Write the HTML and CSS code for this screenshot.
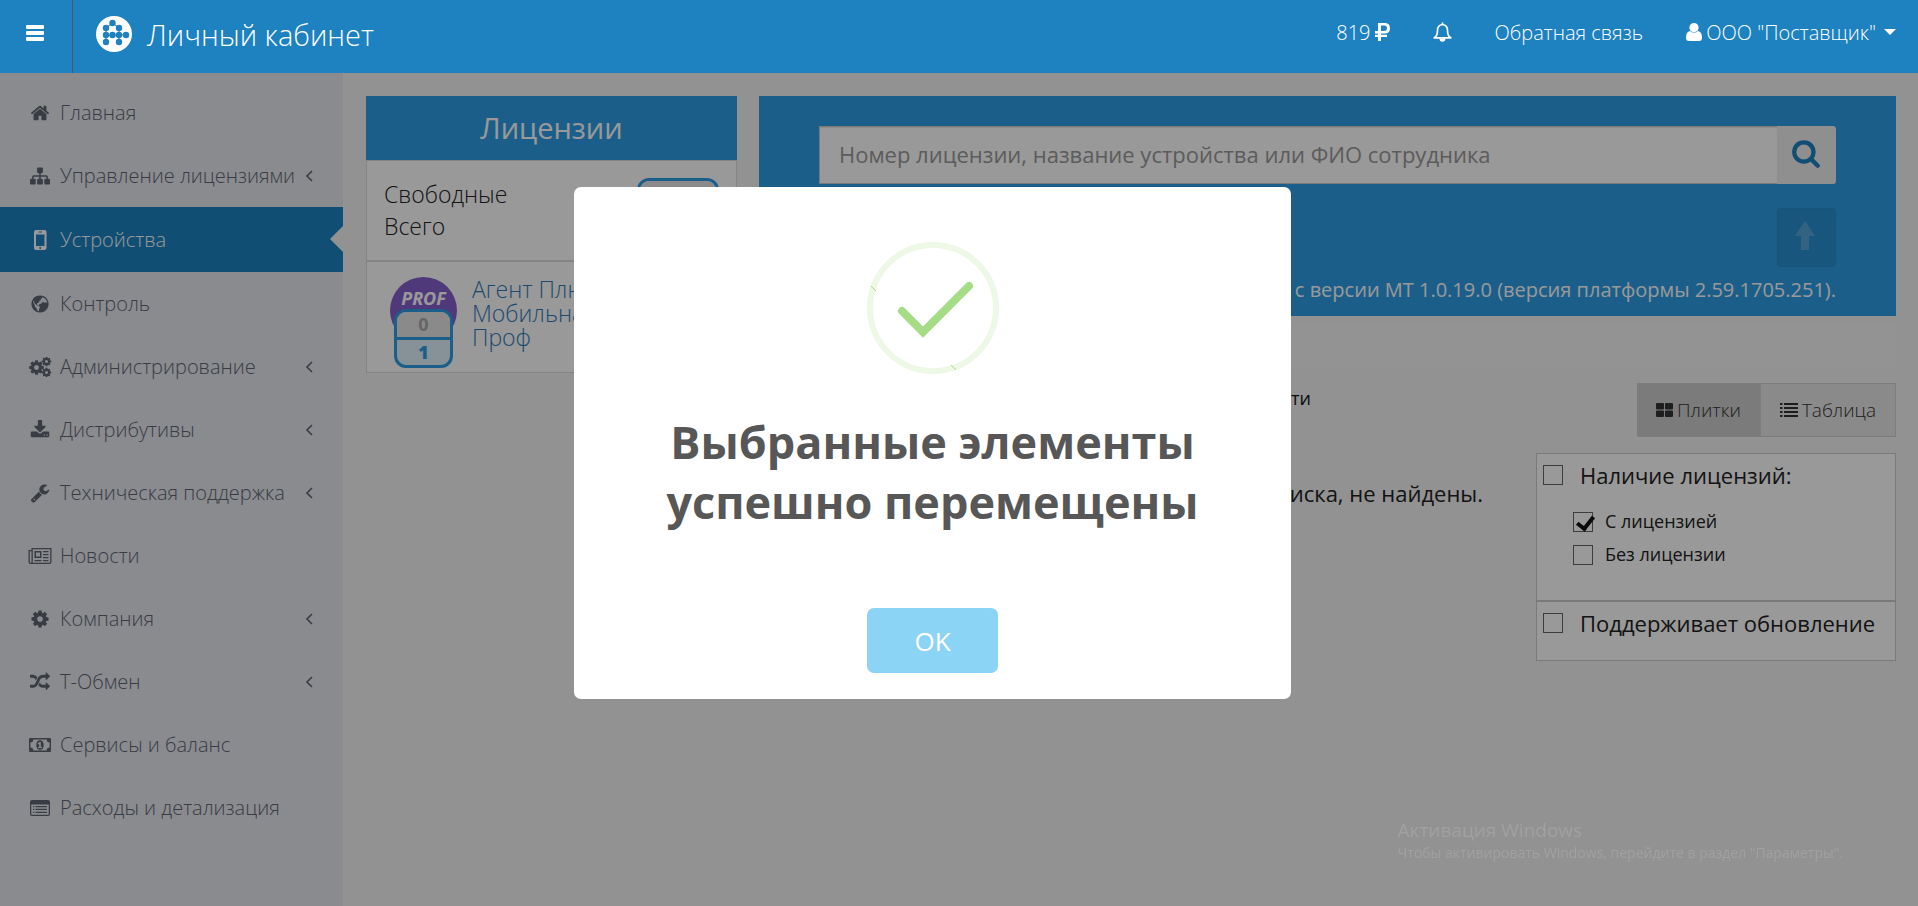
FILE: index.html
```html
<!DOCTYPE html>
<html lang="ru">
<head>
    <meta charset="UTF-8">
    <meta name="viewport" content="width=device-width, initial-scale=1.0">
    <title>Личный кабинет</title>
    <link rel="stylesheet" href="styles.css">
</head>
<body>
    <!-- Icon set -->
    <svg class="sprite" aria-hidden="true">
        <symbol id="i-bars" viewBox="0 0 18 16"><path d="M1 0h16q1 0 1 1v2q0 1-1 1H1Q0 4 0 3V1q0-1 1-1zM1 6h16q1 0 1 1v2q0 1-1 1H1q-1 0-1-1V7q0-1 1-1zM1 12h16q1 0 1 1v2q0 1-1 1H1q-1 0-1-1v-2q0-1 1-1z"/></symbol>
        <symbol id="i-home" viewBox="0 0 1792 1792"><path d="M1472 992v480q0 26-19 45t-45 19h-384v-384h-256v384h-384q-26 0-45-19t-19-45v-480q0-1 .5-3t.5-3l575-474 575 474q1 2 1 6zm223-69l-62 74q-8 9-21 11h-3q-13 0-21-7l-692-577-692 577q-12 8-24 7-13-2-21-11l-62-74q-8-10-7-23.500t11-21.500l719-599q32-26 76-26t76 26l244 204v-195q0-14 9-23t23-9h192q14 0 23 9t9 23v408l219 182q10 8 11 21.500t-7 23.500z"/></symbol>
        <symbol id="i-sitemap" viewBox="0 0 1792 1792"><path d="M1792 1248v320q0 40-28 68t-68 28h-320q-40 0-68-28t-28-68v-320q0-40 28-68t68-28h96v-192h-512v192h96q40 0 68 28t28 68v320q0 40-28 68t-68 28h-320q-40 0-68-28t-28-68v-320q0-40 28-68t68-28h96v-192h-512v192h96q40 0 68 28t28 68v320q0 40-28 68t-68 28h-320q-40 0-68-28t-28-68v-320q0-40 28-68t68-28h96v-192q0-52 38-90t90-38h512v-192h-96q-40 0-68-28t-28-68v-320q0-40 28-68t68-28h320q40 0 68 28t28 68v320q0 40-28 68t-68 28h-96v192h512q52 0 90 38t38 90v192h96q40 0 68 28t28 68z"/></symbol>
        <symbol id="i-mobile" viewBox="0 0 20 20"><path fill-rule="evenodd" d="M6 0h8.500q2 0 2 2v16q0 2-2 2H6q-2 0-2-2V2q0-2 2-2zM6 4.500v11.500h8.500V4.500zM8.500 1.500v1H12v-1zM10.200 17a1 1 0 1 0 .01 0z"/></symbol>
        <symbol id="i-globe" viewBox="0 0 20 20"><path fill-rule="evenodd" d="M10 1.400a8.600 8.600 0 1 0 .01 0zM12.500 3.200l2.500 1.300 1.800 2.500.4 2-1.700-.8-1.300.7-.6-1.200-1.200.5-1 1.300-2 .8-.6 1.200-1.500-.4-.3-1.900 1.700-.5.200-1.200 1.700-1.200.4-1.200zM3.700 6.200l1 3.300 1.800 1.600 2.400.8 1.200 1.600-1.200 1.700.2 2-1.300-.3-1.400-2.600-1.300-1.600-.8-2.400-1-1.800z"/></symbol>
        <symbol id="i-cog" viewBox="0 0 1792 1792"><path d="M1152 896q0-106-75-181t-181-75-181 75-75 181 75 181 181 75 181-75 75-181zm512-109v222q0 12-8 23t-20 13l-185 28q-19 54-39 91 35 50 107 138 10 12 10 25t-9 23q-27 37-99 108t-94 71q-12 0-26-9l-138-108q-44 23-91 38-16 136-29 186-7 28-36 28h-222q-14 0-24.500-8.500t-11.500-21.500l-28-184q-49-16-90-37l-141 107q-10 9-25 9-14 0-25-11-126-114-165-168-7-10-7-23 0-12 8-23 15-21 51-66.500t54-70.500q-27-50-41-99l-183-27q-13-2-21-12.500t-8-23.500v-222q0-12 8-23t19-13l186-28q14-46 39-92-40-57-107-138-10-12-10-24 0-10 9-23 26-36 98.500-107.500t94.500-71.500q13 0 26 10l138 107q44-23 91-38 16-136 29-186 7-28 36-28h222q14 0 24.500 8.500t11.500 21.500l28 184q49 16 90 37l142-107q9-9 24-9 13 0 25 10 129 119 165 170 7 8 7 22 0 12-8 23-15 21-51 66.500t-54 70.500q26 50 41 98l183 28q13 2 21 12.500t8 23.500z"/></symbol>
        <symbol id="i-cogs" viewBox="0 0 22 20">
            <use href="#i-cog" x="-1" y="2" width="17" height="17"/>
            <use href="#i-cog" x="12" y="-1" width="11" height="11"/>
            <use href="#i-cog" x="12" y="10" width="11" height="11"/>
        </symbol>
        <symbol id="i-download" viewBox="0 0 1792 1792"><path d="M1344 1344q0-26-19-45t-45-19-45 19-19 45 19 45 45 19 45-19 19-45zm256 0q0-26-19-45t-45-19-45 19-19 45 19 45 45 19 45-19 19-45zm128-224v320q0 40-28 68t-68 28h-1472q-40 0-68-28t-28-68v-320q0-40 28-68t68-28h465l135 136q58 56 136 56t136-56l136-136h464q40 0 68 28t28 68zm-325-569q17 41-14 70l-448 448q-18 19-45 19t-45-19l-448-448q-31-29-14-70 17-39 59-39h256v-448q0-26 19-45t45-19h256q26 0 45 19t19 45v448h256q42 0 59 39z"/></symbol>
        <symbol id="i-wrench" viewBox="0 0 1792 1792"><path d="M448 1472q0-26-19-45t-45-19-45 19-19 45 19 45 45 19 45-19 19-45zm644-420l-682 682q-37 37-90 37-52 0-91-37l-106-108q-38-36-38-90 0-53 38-91l681-681q39 98 114.500 173.500t173.500 114.500zm634-435q0 39-23 106-47 134-164.500 217.500t-258.500 83.500q-185 0-316.500-131.500t-131.500-316.500 131.500-316.500 316.500-131.500q58 0 121.500 16.500t107.500 46.500q16 11 16 28t-16 28l-293 169v224l193 107q5-3 79-48.500t135.500-81 70.500-35.500q15 0 23.500 10t8.500 25z"/></symbol>
        <symbol id="i-news" viewBox="0 0 23 16"><path fill-rule="evenodd" d="M3 0h20v14q0 2-2 2H2q-2 0-2-2V2h3zM4.300 1.300V14q0 .4-.2.700H21q.7 0 .7-.7V1.300zM1.300 3.300V14q0 .7.800.7T3 14V3.300zM6 3h7v7H6zM7.500 4.500v4h4v-4zM14.500 3H20v1.300h-5.500zM14.500 6H20v1.300h-5.500zM14.500 9H20v1.300h-5.500zM6 12h7v1.300H6zM14.500 12H20v1.300h-5.500z"/></symbol>
        <symbol id="i-random" viewBox="0 0 1792 1792"><path d="M666 481q-60 92-137 273-22-45-37-72.500t-40.500-63.500-51-56.500-63-35-81.500-14.500h-224q-14 0-23-9t-9-23v-192q0-14 9-23t23-9h224q250 0 410 225zm1126 799q0 14-9 23l-320 320q-9 9-23 9-13 0-22.500-9.500t-9.500-22.500v-192q-32 0-85 .5t-81 1-73-1-71-5-64-10.500-63-18.500-58-28.500-59-40-55-53.500-56-69.500q59-93 136-273 22 45 37 72.500t40.500 63.500 51 56.500 63 35 81.500 14.500h256v-192q0-14 9-23t23-9q12 0 24 10l319 319q9 9 9 23zm0-896q0 14-9 23l-320 320q-9 9-23 9-13 0-22.500-9.500t-9.500-22.500v-192h-256q-48 0-87 15t-69 45-51 61.500-45 77.500q-32 62-78 171-29 66-49.500 111t-54 105-64 100-74 83-90 68.500-106.500 42-128 16.500h-224q-14 0-23-9t-9-23v-192q0-14 9-23t23-9h224q48 0 87-15t69-45 51-61.500 45-77.500q32-62 78-171 29-66 49.500-111t54-105 64-100 74-83 90-68.500 106.500-42 128-16.500h256v-192q0-14 9-23t23-9q12 0 24 10l319 319q9 9 9 23z"/></symbol>
        <symbol id="i-money" viewBox="0 0 22 14"><path fill-rule="evenodd" d="M1 0h20q1 0 1 1v12q0 1-1 1H1q-1 0-1-1V1q0-1 1-1zM4.300 1.400Q4.300 4.400 1.400 4.400v5.200q2.900 0 2.900 3h13.400q0-3 2.900-3V4.400q-2.900 0-2.900-3zM11 2.300q3.700 0 3.700 4.700T11 11.700 7.300 7 11 2.300zM10.500 4L8.700 5.600l.7.900.8-.6V9H9v1.100h4V9h-1.200V4z"/></symbol>
        <symbol id="i-list" viewBox="0 0 20 16"><path fill-rule="evenodd" d="M2 0h16q2 0 2 2v12q0 2-2 2H2q-2 0-2-2V2q0-2 2-2zM1.300 4.500V14q0 .7.700.7h16q.7 0 .7-.7V4.500zM3 6h1.300v1.200H3zM5.500 6H17v1.200H5.500zM3 8.800h1.300V10H3zM5.500 8.800H17V10H5.500zM3 11.700h1.300v1.200H3zM5.500 11.700H17v1.200H5.500z"/></symbol>
        <symbol id="i-left" viewBox="0 0 8 12"><path d="M7 1L2 6l5 5" fill="none" stroke="currentColor" stroke-width="1.600"/></symbol>
        <symbol id="i-ruble" viewBox="0 0 15 18"><path fill-rule="evenodd" d="M3 0h6.500Q15 0 15 5.200t-5.500 5.300H6v1.300h6V14H6v4H3v-4H0v-2.200h3v-1.300H0V8h3zM6 2.600V8h3.200q2.700 0 2.700-2.700T9.200 2.600z"/></symbol>
        <symbol id="i-bell" viewBox="0 0 19 20"><path d="M9.500 .5v2M9.500 2.500Q4.500 3 4.500 8.500T1.200 15.800h16.600Q14.500 14 14.500 8.500T9.500 2.500z" fill="none" stroke="currentColor" stroke-width="1.700" stroke-linejoin="round"/><path d="M6.500 16.500h6q0 3.300-3 3.300t-3-3.300z"/></symbol>
        <symbol id="i-user" viewBox="0 0 16 18"><path d="M8 0a4.600 4.600 0 1 1-.01 0zM4 8q4 3.500 8 0 4 .7 4 6.500 0 3.500-3 3.500H3q-3 0-3-3.500Q0 8.700 4 8z"/></symbol>
        <symbol id="i-search" viewBox="0 0 1792 1792"><path d="M1216 832q0-185-131.500-316.500t-316.500-131.500-316.500 131.500-131.500 316.500 131.500 316.500 316.500 131.500 316.500-131.500 131.500-316.500zm512 832q0 52-38 90t-90 38q-54 0-90-38l-343-342q-179 124-399 124-143 0-273.500-55.500t-225-150-150-225-55.500-273.500 55.500-273.500 150-225 225-150 273.500-55.500 273.500 55.500 225 150 150 225 55.500 273.500q0 220-124 399l343 343q37 37 37 90z"/></symbol>
        <symbol id="i-up" viewBox="0 0 20 29"><path d="M10 0l10 15h-6v14H6V15H0z"/></symbol>
        <symbol id="i-tiles" viewBox="0 0 17 14"><path d="M1 0h6q1 0 1 1v4.500q0 1-1 1H1q-1 0-1-1V1q0-1 1-1zM10 0h6q1 0 1 1v4.500q0 1-1 1h-6q-1 0-1-1V1q0-1 1-1zM1 7.500h6q1 0 1 1V13q0 1-1 1H1q-1 0-1-1V8.500q0-1 1-1zM10 7.500h6q1 0 1 1V13q0 1-1 1h-6q-1 0-1-1V8.500q0-1 1-1z"/></symbol>
        <symbol id="i-rows" viewBox="0 0 18 14"><path d="M0 0h2.500v2H0zM4 0h14v2H4zM0 4h2.500v2H0zM4 4h14v2H4zM0 8h2.500v2H0zM4 8h14v2H4zM0 12h2.500v2H0zM4 12h14v2H4z"/></symbol>
    </svg>

    <header class="topbar">
        <button class="menu-toggle" aria-label="Меню"><svg width="18" height="16"><use href="#i-bars"/></svg></button>
        <a class="brand" href="#">
            <svg class="logo" viewBox="0 0 36 36" width="36" height="36">
                <circle class="logo-bg" cx="18" cy="18" r="18"/>
                <g class="logo-dots">
                    <path d="M10 12l6.500-5L23 12M10 12v14M23 12v14M10 19h20"/>
                    <circle cx="16.500" cy="7" r="3.200"/><circle cx="10" cy="12" r="3.200"/><circle cx="23" cy="12" r="3.200"/>
                    <circle cx="10" cy="19" r="3.200"/><circle cx="16.500" cy="19" r="3.200"/><circle cx="23" cy="19" r="3.200"/><circle cx="30" cy="19" r="3.200"/>
                    <circle cx="10" cy="26" r="3.200"/><circle cx="23" cy="26" r="3.200"/>
                </g>
            </svg>
            <span>Личный кабинет</span>
        </a>
        <nav class="top-links">
            <a href="#">819 <svg width="15" height="18"><use href="#i-ruble"/></svg></a>
            <a href="#" aria-label="Уведомления"><svg width="19" height="20"><use href="#i-bell"/></svg></a>
            <a href="#">Обратная связь</a>
            <a href="#"><svg width="16" height="18"><use href="#i-user"/></svg> ООО "Поставщик" <span class="caret"></span></a>
        </nav>
    </header>

    <div class="page">
        <nav class="sidebar">
            <a href="#"><svg class="icon"><use href="#i-home"/></svg>Главная</a>
            <a href="#"><svg class="icon"><use href="#i-sitemap"/></svg>Управление лицензиями<svg class="arrow"><use href="#i-left"/></svg></a>
            <a href="#" class="active"><svg class="icon"><use href="#i-mobile"/></svg>Устройства</a>
            <a href="#"><svg class="icon"><use href="#i-globe"/></svg>Контроль</a>
            <a href="#"><svg class="icon"><use href="#i-cogs"/></svg>Администрирование<svg class="arrow"><use href="#i-left"/></svg></a>
            <a href="#"><svg class="icon"><use href="#i-download"/></svg>Дистрибутивы<svg class="arrow"><use href="#i-left"/></svg></a>
            <a href="#"><svg class="icon"><use href="#i-wrench"/></svg>Техническая поддержка<svg class="arrow"><use href="#i-left"/></svg></a>
            <a href="#"><svg class="icon icon-low"><use href="#i-news"/></svg>Новости</a>
            <a href="#"><svg class="icon"><use href="#i-cog"/></svg>Компания<svg class="arrow"><use href="#i-left"/></svg></a>
            <a href="#"><svg class="icon"><use href="#i-random"/></svg>Т-Обмен<svg class="arrow"><use href="#i-left"/></svg></a>
            <a href="#"><svg class="icon icon-money"><use href="#i-money"/></svg>Сервисы и баланс</a>
            <a href="#"><svg class="icon icon-low"><use href="#i-list"/></svg>Расходы и детализация</a>
        </nav>

        <main class="content">
            <section class="licenses">
                <h2>Лицензии</h2>
                <div class="license-total">
                    <div>Свободные<br>Всего</div>
                    <div class="counter"><span>0</span><b>1</b></div>
                </div>
                <div class="license-item">
                    <div class="product">
                        <span class="prof">PROF</span>
                        <div class="counter"><span>0</span><b>1</b></div>
                    </div>
                    <a href="#">Агент Плюс:<br>Мобильная торговля<br>Проф</a>
                </div>
            </section>

            <section class="devices">
                <div class="search-panel">
                    <form class="search">
                        <input type="text" aria-label="Поиск" placeholder="Номер лицензии, название устройства или ФИО сотрудника">
                        <button type="button" aria-label="Найти"><svg width="30" height="30"><use href="#i-search"/></svg></button>
                    </form>
                    <button class="upload" aria-label="Обновить" disabled><svg width="20" height="29"><use href="#i-up"/></svg></button>
                    <p>Обновление поддерживается с версии МТ 1.0.19.0 (версия платформы 2.59.1705.251).</p>
                </div>
                <div class="strip"></div>
                <div class="toolbar">
                    <span>Сортировать по активности</span>
                    <div class="view-toggle">
                        <button class="on"><svg width="17" height="18"><use href="#i-tiles"/></svg> Плитки</button>
                        <button><svg width="18" height="18"><use href="#i-rows"/></svg> Таблица</button>
                    </div>
                </div>
                <div class="results">
                    <p>Устройства, подходящие под условия поиска, не найдены.</p>
                    <div class="filters">
                        <div class="filter-group">
                            <label><input type="checkbox"> Наличие лицензий:</label>
                            <label class="sub"><input type="checkbox" checked> С лицензией</label>
                            <label class="sub"><input type="checkbox"> Без лицензии</label>
                        </div>
                        <div class="filter-group last">
                            <label><input type="checkbox"> Поддерживает обновление</label>
                        </div>
                    </div>
                </div>
            </section>
        </main>
    </div>

    <div class="overlay">
        <div class="modal" role="dialog" aria-labelledby="modal-title">
            <svg class="success" viewBox="0 0 132 132" width="132" height="132">
                <circle class="ring" cx="66" cy="66" r="63"/>
                <path class="ticks" d="M4 44l5 5M84 123l5 5"/>
                <path class="check" d="M35 69l21 21 46-46"/>
            </svg>
            <h2 id="modal-title">Выбранные элементы успешно перемещены</h2>
            <button>OK</button>
        </div>
    </div>

    <div class="watermark">
        <div class="watermark-title">Активация Windows</div>
        <div>Чтобы активировать Windows, перейдите в раздел "Параметры".</div>
    </div>
</body>
</html>
```
FILE: styles.css
```css
* {
    box-sizing: border-box;
}

body {
    margin: 0;
    min-height: 100vh;
    display: flex;
    flex-direction: column;
    font-family: "Open Sans", "Noto Sans", sans-serif;
    font-size: 20px;
    font-weight: 300;
    color: #222;
    background-color: #f3f3f6;
}

a {
    text-decoration: none;
}

button {
    font-family: inherit;
    font-weight: inherit;
    cursor: pointer;
}

svg {
    fill: currentColor;
    flex: none;
}

.sprite {
    position: absolute;
    width: 0;
    height: 0;
}

/* Top bar stays above the overlay */
.topbar {
    position: relative;
    z-index: 20;
    display: flex;
    height: 73px;
    background-color: #1e81c0;
    color: white;
}

.topbar a {
    color: white;
}

.menu-toggle {
    width: 73px;
    padding: 0 2px 3px 0;
    background: none;
    border: none;
    border-right: 1px solid #4d5a63;
    color: white;
}

.brand {
    display: flex;
    align-items: center;
    gap: 15px;
    padding: 0 0 5px 23px;
    font-size: 29px;
}

.logo-bg {
    fill: white;
}

.logo-dots {
    fill: #1e81c0;
}

.logo-dots path {
    fill: none;
    stroke: #1e81c0;
    stroke-width: 1;
}

.top-links {
    display: flex;
    align-items: center;
    gap: 43px;
    margin-left: auto;
    padding: 0 22px 9px 0;
}

.top-links a {
    display: flex;
    align-items: center;
    gap: 4px;
}

.caret {
    margin-left: 4px;
    border: 6px solid transparent;
    border-top-color: white;
    border-bottom: none;
}

.page {
    flex: 1;
    display: flex;
}

.sidebar {
    width: 343px;
    flex: none;
    padding-top: 8px;
    background-color: #e6e8ee;
}

.sidebar a {
    position: relative;
    display: flex;
    align-items: center;
    height: 63px;
    padding: 0 30px 0 27px;
    color: #606470;
}

.sidebar .icon {
    width: 26px;
    height: 20px;
    margin-right: 7px;
    color: #606470;
}

.sidebar .icon-low {
    height: 16px;
}

.sidebar .icon-money {
    height: 14px;
}

.sidebar .arrow {
    width: 8px;
    height: 12px;
    margin-left: auto;
}

.sidebar .active,
.sidebar .active .icon {
    color: white;
}

.sidebar .active {
    height: 65px;
    background-color: #1c82c1;
}

/* Notch pointing at the current section */
.sidebar .active::after {
    content: "";
    position: absolute;
    right: 0;
    top: 19px;
    border: 13px solid transparent;
    border-right-color: #f3f3f6;
    border-left: none;
}

.content {
    flex: 1;
    display: grid;
    grid-template-columns: 371px minmax(0, 1fr);
    gap: 22px;
    align-items: start;
    padding: 23px 22px 23px 23px;
}

.licenses h2 {
    margin: 0;
    font-size: 29px;
    font-weight: 400;
    line-height: 64px;
    text-align: center;
    color: white;
    background-color: #2d9de6;
}

.license-total,
.license-item {
    display: flex;
    justify-content: space-between;
    background-color: white;
    border: 1px solid #dcdcdc;
    font-size: 23px;
}

.license-total {
    height: 101px;
    padding: 17px;
    line-height: 32px;
    color: #222;
}

.license-total .counter {
    width: 82px;
}

.license-item {
    justify-content: flex-start;
    gap: 15px;
    padding: 15px 23px 4px;
    line-height: 24px;
}

.license-item a {
    color: #337ab7;
}

.product {
    position: relative;
    width: 67px;
    height: 91px;
}

.prof {
    display: block;
    width: 67px;
    height: 67px;
    padding-top: 10px;
    border-radius: 50%;
    background-color: #8560cc;
    color: white;
    font-size: 18px;
    font-weight: 700;
    font-style: italic;
    line-height: 22px;
    text-align: center;
}

.counter {
    width: 59px;
    height: 59px;
    display: flex;
    flex-direction: column;
    overflow: hidden;
    border: 3px solid #2d9de6;
    border-radius: 12px;
    background-color: #e2f3fd;
    font-size: 18px;
    font-weight: 700;
    line-height: 25px;
    text-align: center;
    color: #2d9de6;
}

.counter span {
    background-color: #e6e6e6;
    color: #aaa;
    border-bottom: 3px solid #2d9de6;
}

.product .counter {
    position: absolute;
    left: 4px;
    bottom: 0;
}

.search-panel {
    padding: 30px 60px 13px;
    background-color: #2d9de6;
    color: white;
}

.search {
    display: flex;
    height: 58px;
}

.search input {
    flex: 1;
    padding: 0 19px 2px;
    border: 1px solid #ccc;
    border-right: none;
    border-radius: 0;
    box-shadow: inset 0 1px 1px rgba(0, 0, 0, 0.1);
    font-family: inherit;
    font-size: 22px;
}

.search input::placeholder {
    color: #999;
    font-weight: 400;
}

.search button {
    width: 59px;
    padding: 0 2px 0 0;
    border: none;
    border-radius: 0 3px 3px 0;
    background-color: #eee;
    color: #1c82c1;
}

.upload {
    display: block;
    width: 59px;
    height: 59px;
    margin: 24px 0 0 auto;
    padding: 0 3px 0 0;
    border: 1px solid #2a8bca;
    border-radius: 4px;
    background-color: #2b90d1;
    color: #54a5db;
}

.search-panel p {
    margin: 9px 0 0;
    font-weight: 400;
    line-height: 27px;
    text-align: right;
}

.strip {
    height: 44px;
    margin: 7px 0 16px;
    background-color: #f5f5f5;
}

.toolbar {
    display: grid;
    grid-template-columns: 1fr 585px;
    margin-bottom: 16px;
    text-align: right;
    color: #111;
}

.toolbar > span {
    font-size: 18px;
    font-weight: 400;
    line-height: 30px;
}

.view-toggle {
    display: flex;
    justify-content: flex-end;
}

.view-toggle button {
    display: flex;
    align-items: center;
    gap: 4px;
    height: 54px;
    padding: 0 19px;
    border: 1px solid #d0d0d0;
    border-left: none;
    background-color: #e7e7e7;
    color: #333;
    font-size: 19px;
}

.view-toggle .on {
    background-color: #cecece;
}

.results {
    display: grid;
    grid-template-columns: 1fr 360px;
    gap: 53px;
    align-items: start;
    font-size: 22px;
    color: #222;
}

.results p {
    margin: 24px 0 0;
    line-height: 32px;
    font-weight: 400;
    text-align: right;
}

.filter-group {
    height: 148px;
    padding: 5px 6px;
    border: 1px solid #ccc;
    background-color: white;
}

.filter-group.last {
    height: 60px;
}

.filter-group label {
    display: flex;
    align-items: center;
    gap: 17px;
    line-height: 32px;
    font-weight: 400;
}

.filter-group .sub {
    gap: 12px;
    padding-left: 30px;
    font-size: 18px;
    line-height: 33px;
}

.filter-group label:first-child + .sub {
    margin-top: 14px;
}

.filter-group input {
    appearance: none;
    width: 20px;
    height: 20px;
    margin: 0;
    border: 1px solid #666;
    background-color: white;
}

.filter-group input:checked::before {
    content: "";
    display: block;
    width: 7px;
    height: 13px;
    margin: 0 0 0 6px;
    border: solid #111;
    border-width: 0 4px 4px 0;
    transform: rotate(38deg);
}

/* Message */
.overlay {
    position: fixed;
    inset: 0;
    z-index: 10;
    display: flex;
    align-items: center;
    justify-content: center;
    padding: 0 53px 20px 0;
    background-color: rgba(0, 0, 0, 0.4);
}

.modal {
    width: 717px;
    padding: 55px 26px 26px;
    border-radius: 7px;
    background-color: white;
    text-align: center;
}

.success {
    display: block;
    margin: 0 auto;
    fill: none;
}

.ring {
    stroke: #edf8e7;
    stroke-width: 6;
}

.ticks {
    stroke: #a5dc86;
    stroke-width: 1;
}

.check {
    stroke: #a5dc86;
    stroke-width: 8;
    stroke-linecap: round;
}

.modal h2 {
    max-width: 580px;
    margin: 38px auto 76px;
    font-size: 45px;
    font-weight: 700;
    line-height: 60px;
    color: #575757;
}

.modal button {
    height: 65px;
    padding: 0 47px;
    border: none;
    border-radius: 7px;
    background-color: #8cd4f5;
    color: white;
    font-size: 26px;
    font-weight: 400;
}

.watermark {
    position: fixed;
    z-index: 15;
    right: 75px;
    bottom: 43px;
    font-size: 14px;
    font-weight: 400;
    line-height: 20px;
    color: #a1a1a2;
}

.watermark-title {
    font-size: 19px;
    line-height: 26px;
}
```
